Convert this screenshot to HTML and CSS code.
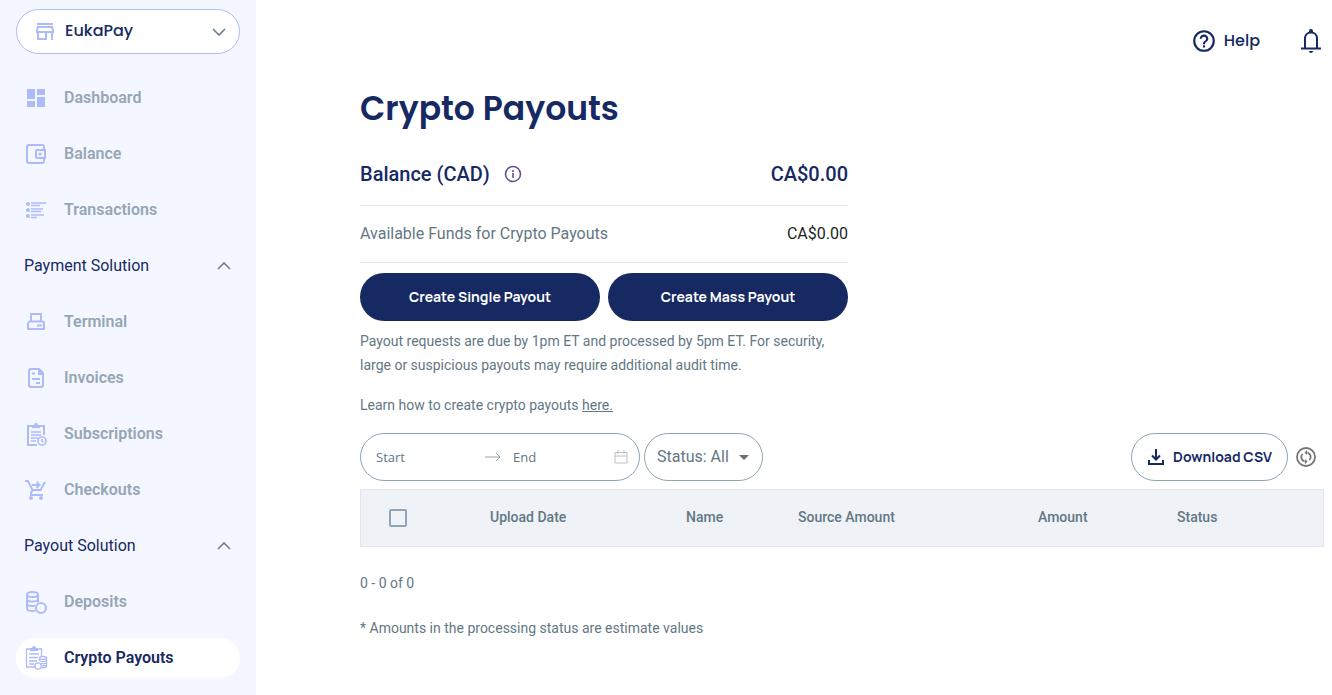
FILE: index.html
```html
<!DOCTYPE html>
<html lang="en">
<head>
  <meta charset="UTF-8" />
  <meta name="viewport" content="width=device-width, initial-scale=1.0"/>
  <title>EukaPay - Crypto Payouts</title>
  <link rel="stylesheet" href="styles.css">
</head>
<body>
  <aside class="sidebar">
    <button class="store-select" type="button">
      <svg class="store-icon" viewBox="0 0 20 20" fill="currentColor"><path d="M2 1h16v2H2zM2 4h16l1 5v2h-1v7h-2v-7h-4v7H2v-7H1V9zm2 7v5h6v-5zM3.600 6 3 9h14l-.6-3z" fill-rule="evenodd"/></svg>
      <span class="store-name">EukaPay</span>
      <svg class="chevron" viewBox="0 0 14 8"><path d="M1 1l6 6 6-6"/></svg>
    </button>
    <nav>
      <a class="nav-item" href="#">
        <svg class="nav-icon solid" viewBox="0 0 24 24"><path d="M3 3h8v10H3zM13 3h8v6h-8zM3 15h8v6H3zM13 11h8v10h-8z"/></svg>
        Dashboard
      </a>
      <a class="nav-item" href="#">
        <svg class="nav-icon" viewBox="0 0 24 24"><path d="M20 7V5a2 2 0 0 0-2-2H5a2 2 0 0 0-2 2v14a2 2 0 0 0 2 2h13a2 2 0 0 0 2-2v-2M13 8h8v8h-8a1 1 0 0 1-1-1V9a1 1 0 0 1 1-1z"/><circle class="dot" cx="16" cy="12" r="1.600"/></svg>
        Balance
      </a>
      <a class="nav-item" href="#">
        <svg class="nav-icon" viewBox="0 0 24 24"><g class="dot"><circle cx="4" cy="6" r="2"/><circle cx="4" cy="12" r="2"/><circle cx="4" cy="18" r="2"/></g><path class="thin" d="M7 5h15M7 7.500h9M7 11h12M7 13.500h10M7 17h13M7 19.500h6"/></svg>
        Transactions
      </a>
      <button class="nav-group" type="button">
        Payment Solution
        <svg class="chevron" viewBox="0 0 14 8"><path d="M1 7l6-6 6 6"/></svg>
      </button>
      <a class="nav-item" href="#">
        <svg class="nav-icon" viewBox="0 0 24 24"><path d="M7 11V4h10v7M4 19v-5.500a2 2 0 0 1 2-2h12a2 2 0 0 1 2 2V19zM13 15.500h5"/></svg>
        Terminal
      </a>
      <a class="nav-item" href="#">
        <svg class="nav-icon" viewBox="0 0 24 24"><path d="M15 3H7a2 2 0 0 0-2 2v14a2 2 0 0 0 2 2h10a2 2 0 0 0 2-2V7zM8 7.500h3M8 13h8M12 17h4"/><path class="dot" d="M14 3h2l4 4v2h-6z"/></svg>
        Invoices
      </a>
      <a class="nav-item" href="#">
        <svg class="nav-icon" viewBox="0 0 24 24"><path d="M20 13V4H4v19h9"/><path class="dot" d="M8 6V3h2a2 2 0 0 1 4 0h2v3z"/><path class="medium" d="M7 10h10M7 13h10M7 16h7M7 19h5"/><circle class="medium" cx="18" cy="19" r="4"/><path class="medium" d="M18 17v2l1.500 1"/></svg>
        Subscriptions
      </a>
      <a class="nav-item" href="#">
        <svg class="nav-icon" viewBox="0 0 24 24"><path d="M1 3h3l4.500 9h8L21 4M8.500 12 7 15v2h12M8 7h7M12.500 4l3 3-3 3"/><g class="dot"><circle cx="7" cy="20" r="2"/><circle cx="17" cy="20" r="2"/></g></svg>
        Checkouts
      </a>
      <button class="nav-group" type="button">
        Payout Solution
        <svg class="chevron" viewBox="0 0 14 8"><path d="M1 7l6-6 6 6"/></svg>
      </button>
      <a class="nav-item" href="#">
        <svg class="nav-icon" viewBox="0 0 24 24"><ellipse cx="8.500" cy="4.500" rx="5.500" ry="2.500"/><path d="M3 4.500v14c0 1.500 2.500 2.500 5.500 2.500 1 0 2-.1 3-.4M14 4.500v8M3 9c0 1.500 2.500 2.500 5.500 2.500S14 10.500 14 9M3 13.500C3 15 5.500 16 8.500 16c1 0 2-.1 3-.4"/><circle cx="17" cy="18" r="5"/></svg>
        Deposits
      </a>
      <a class="nav-item active" href="#">
        <svg class="nav-icon" viewBox="0 0 24 24"><g class="thin"><path d="M6 3H2.500v18H12M14 3h3.500v7"/><path class="dot" d="M6 5V2h2a2 2 0 0 1 4 0h2v3z"/><path d="M5 8h10M5 11.500h9M5 15h8M5 18h5"/><ellipse cx="19" cy="12" rx="3.500" ry="1.500"/><path d="M15.500 12v3M22.500 12v8c0 2-3 2-5 1.500M15.500 14.500c1 1.500 6 1.500 7 0M17 17.500c2 .3 5 .1 5.500-.8M18 20c2 0 4 0 4.500-.8"/><circle cx="14" cy="20" r="3.200"/></g></svg>
        Crypto Payouts
      </a>
    </nav>
  </aside>

  <div class="page">
    <header class="topbar">
      <a class="help" href="#">
        <svg class="icon-help" viewBox="0 0 24 24" fill="currentColor"><path d="M11 18h2v-2h-2zm1-16a10 10 0 1 0 0 20 10 10 0 0 0 0-20zm0 18a8 8 0 1 1 0-16 8 8 0 0 1 0 16zm0-14a4 4 0 0 0-4 4h2a2 2 0 1 1 4 0c0 2-3 1.750-3 5h2c0-2.250 3-2.500 3-5a4 4 0 0 0-4-4z"/></svg>
        Help
      </a>
      <button class="bell" type="button" aria-label="Notifications">
        <svg viewBox="0 0 22 26"><path d="M5 20V10.500C5 7 7.500 4.500 11 4.500s6 2.500 6 6V20M1 20.500h20"/><path class="bell-fill" d="M9 4V3a2 2 0 0 1 4 0v1zM9 23h4a2 2 0 0 1-4 0z"/></svg>
      </button>
    </header>

    <main>
      <h1>Crypto Payouts</h1>

      <section class="summary">
        <div class="balance-row">
          <span class="balance-label">Balance (CAD)
            <svg class="info" viewBox="0 0 18 18"><circle cx="9" cy="9" r="7.500"/><path d="M9 8v5M9 5v2"/></svg>
          </span>
          <span>CA$0.00</span>
        </div>
        <div class="funds-row">
          <span>Available Funds for Crypto Payouts</span>
          <span class="funds-value">CA$0.00</span>
        </div>
        <div class="payout-actions">
          <button class="btn-primary" type="button">Create Single Payout</button>
          <button class="btn-primary" type="button">Create Mass Payout</button>
        </div>
        <p>Payout requests are due by 1pm ET and processed by 5pm ET. For security, large or suspicious payouts may require additional audit time.</p>
        <p class="learn">Learn how to create crypto payouts <a href="#">here.</a></p>
      </section>

      <div class="filters">
        <div class="date-range">
          <input class="date-start" type="text" placeholder="Start" aria-label="Start date">
          <svg class="range-arrow" viewBox="0 0 16 10"><path d="M0 5h15M11 1l4 4-4 4"/></svg>
          <input class="date-end" type="text" placeholder="End" aria-label="End date">
          <svg class="calendar" viewBox="0 0 14 14"><path d="M1 2.500h12v10.500H1zM1 6h12M4 0v4M10 0v4"/></svg>
        </div>
        <div class="status-filter">
          <select aria-label="Status">
            <option>Status: All</option>
          </select>
          <svg class="caret" viewBox="0 0 10 5"><path d="M0 0h10L5 5z"/></svg>
        </div>
        <button class="download" type="button">
          <svg viewBox="0 0 18 18"><path d="M9 1v10M5 7.500l4 4 4-4M2 12v4h14v-4"/></svg>
          Download CSV
        </button>
        <button class="refresh" type="button" aria-label="Refresh">
          <svg viewBox="0 0 20 20"><circle cx="10" cy="10" r="9"/><path d="M8 14.200A4.500 4.500 0 0 1 6.500 7M12 5.800A4.500 4.500 0 0 1 13.500 13M10 5.500h1.500M10 14.500H8.500"/><path class="refresh-tip" d="M11 3v5L8.500 5.500zM9 12v5l2.500-2.500z"/></svg>
        </button>
      </div>

      <table class="payouts">
        <thead>
          <tr>
            <th class="col-check"><input type="checkbox" aria-label="Select all"></th>
            <th class="col-date">Upload Date</th>
            <th class="col-name">Name</th>
            <th class="col-source">Source Amount</th>
            <th class="col-amount">Amount</th>
            <th>Status</th>
          </tr>
        </thead>
      </table>

      <p class="count">0 - 0 of 0</p>
      <p class="note">* Amounts in the processing status are estimate values</p>
    </main>
  </div>
</body>
</html>
```
FILE: styles.css
```css
:root {
  --navy: #162963;
  --muted: #637783;
  --nav-text: #96a6b6;
  --lilac: #aebbfb;
  --line: #e2e5ea;
  --outline: #90a4b5;
}
* {
  box-sizing: border-box;
}
body {
  margin: 0;
  display: flex;
  min-height: 100vh;
  font-family: Roboto, "Liberation Sans", sans-serif;
  font-size: 14px;
  line-height: 24px;
  color: var(--muted);
  background: #fff;
}
button, input, select {
  font: inherit;
  color: inherit;
  background: none;
  border: none;
  padding: 0;
  margin: 0;
}
button, select {
  cursor: pointer;
}
a {
  color: inherit;
}
svg {
  display: block;
  flex: none;
}
p {
  margin: 0;
}

/* Sidebar */
.sidebar {
  flex: none;
  width: 256px;
  padding: 9px 16px 16px;
  background: #f4f7ff;
}
.store-select {
  display: flex;
  align-items: center;
  width: 100%;
  height: 45px;
  margin-bottom: 24px;
  padding: 0 13px 0 18px;
  border: 1px solid var(--lilac);
  border-radius: 23px;
  background: #fff;
}
.store-icon {
  width: 20px;
  height: 20px;
  margin-right: 10px;
  color: var(--lilac);
}
.store-name {
  flex: 1;
  padding-bottom: 2px;
  text-align: left;
  font: 500 16px/24px Poppins, Inter, sans-serif;
  color: var(--navy);
}
.chevron {
  width: 14px;
  height: 8px;
  fill: none;
  stroke: #6b7d8c;
  stroke-width: 1.6;
}
nav {
  display: flex;
  flex-direction: column;
  gap: 16px;
}
.nav-item, .nav-group {
  display: flex;
  align-items: center;
  width: 100%;
  height: 40px;
  padding: 0 9px 0 8px;
  border-radius: 20px;
  font-size: 16px;
}
.nav-item {
  gap: 16px;
  font-weight: 600;
  color: var(--nav-text);
  text-decoration: none;
}
.nav-group {
  justify-content: space-between;
  color: var(--navy);
}
.nav-item.active {
  background: #fff;
  color: var(--navy);
}
.nav-icon {
  width: 24px;
  height: 24px;
  fill: none;
  stroke: var(--lilac);
  stroke-width: 2;
}
.nav-icon.solid, .nav-icon .dot {
  fill: var(--lilac);
  stroke: none;
}
.nav-icon .medium {
  stroke-width: 1.6;
}
.nav-icon .thin {
  stroke-width: 1.3;
}

/* Page */
.page {
  flex: 1;
  min-width: 0;
  padding: 0 8px 0 104px;
}
.topbar {
  display: flex;
  justify-content: flex-end;
  align-items: center;
  gap: 40px;
  height: 82px;
  padding-right: 2px;
}
.help {
  display: flex;
  align-items: center;
  gap: 7px;
  font: 500 16px/24px Poppins, Inter, sans-serif;
  color: var(--navy);
  text-decoration: none;
}
.icon-help {
  width: 26px;
  height: 26px;
}
.bell svg {
  width: 22px;
  height: 26px;
  fill: none;
  stroke: var(--navy);
  stroke-width: 2;
}
.bell svg .bell-fill {
  fill: var(--navy);
  stroke: none;
}
h1 {
  margin: 0 0 16px;
  font: 600 33px/54px Poppins, Inter, sans-serif;
  color: var(--navy);
}
.summary {
  max-width: 488px;
}
.balance-row, .funds-row {
  display: flex;
  align-items: center;
  justify-content: space-between;
  border-bottom: 1px solid var(--line);
}
.balance-row {
  height: 54px;
  padding-bottom: 10px;
  font-size: 20px;
  font-weight: 500;
  color: var(--navy);
}
.balance-label {
  display: flex;
  align-items: center;
  gap: 14px;
}
.info {
  width: 18px;
  height: 18px;
  fill: none;
  stroke: #67509a;
  stroke-width: 1.6;
}
.funds-row {
  height: 57px;
  font-size: 16px;
}
.funds-value {
  color: #1b1f24;
}
.payout-actions {
  display: flex;
  gap: 8px;
  margin: 10px 0 8px;
}
.btn-primary {
  flex: 1;
  height: 48px;
  border-radius: 24px;
  background: var(--navy);
  color: #fff;
  font: 700 14px/24px Manrope, Inter, sans-serif;
}
.learn {
  margin: 16px 0;
}

/* Filters */
.filters {
  display: flex;
  align-items: center;
  gap: 4px;
  margin-bottom: 8px;
}
.date-range, .status-filter, .download {
  display: flex;
  align-items: center;
  height: 48px;
  border: 1px solid var(--outline);
  border-radius: 24px;
}
.date-range {
  width: 280px;
  padding: 0 11px 0 15px;
  font-family: "Open Sans", "Noto Sans", sans-serif;
  font-size: 13px;
}
.date-range input {
  min-width: 0;
  outline: none;
}
.date-start {
  width: 109px;
}
.date-end {
  flex: 1;
}
.date-range input::placeholder {
  color: var(--muted);
  opacity: 1;
}
.range-arrow {
  width: 16px;
  height: 10px;
  margin-right: 12px;
  fill: none;
  stroke: #90a4b5;
}
.calendar {
  width: 14px;
  height: 14px;
  fill: none;
  stroke: #bfbfbf;
}
.status-filter {
  position: relative;
  font-size: 16px;
}
.status-filter select {
  appearance: none;
  height: 46px;
  width: 117px;
  padding: 0 30px 0 12px;
  border-radius: 23px;
}
.caret {
  position: absolute;
  right: 13px;
  top: 21px;
  width: 10px;
  height: 5px;
  fill: #6b6f73;
  pointer-events: none;
}
.download {
  gap: 8px;
  margin-left: auto;
  padding: 0 15px;
  font: 700 14px/24px Manrope, Inter, sans-serif;
  color: var(--navy);
}
.download svg {
  width: 18px;
  height: 18px;
  fill: none;
  stroke: var(--navy);
  stroke-width: 2;
}
.refresh {
  margin: 0 8px 0 4px;
}
.refresh svg {
  width: 20px;
  height: 20px;
  fill: none;
  stroke: #757575;
  stroke-width: 1.8;
}
.refresh svg .refresh-tip {
  fill: #757575;
  stroke: none;
}

/* Table */
.payouts {
  width: 100%;
  table-layout: fixed;
  border-collapse: separate;
  border-spacing: 0;
  border: 1px solid var(--line);
  background: #eff3f8;
}
.payouts th {
  height: 56px;
  padding: 0 0 2px;
  text-align: left;
  font-weight: 500;
}
.payouts .col-check {
  width: 129px;
  padding: 0;
}
.col-date {
  width: 196px;
}
.col-name {
  width: 112px;
}
.col-source {
  width: 240px;
}
.col-amount {
  width: 139px;
}
.payouts input {
  appearance: none;
  display: block;
  width: 18px;
  height: 18px;
  margin-left: 28px;
  border: 2px solid var(--outline);
  border-radius: 2px;
}
.payouts input:checked {
  background: var(--navy);
}
.count {
  margin: 24px 0 21px;
}
```
